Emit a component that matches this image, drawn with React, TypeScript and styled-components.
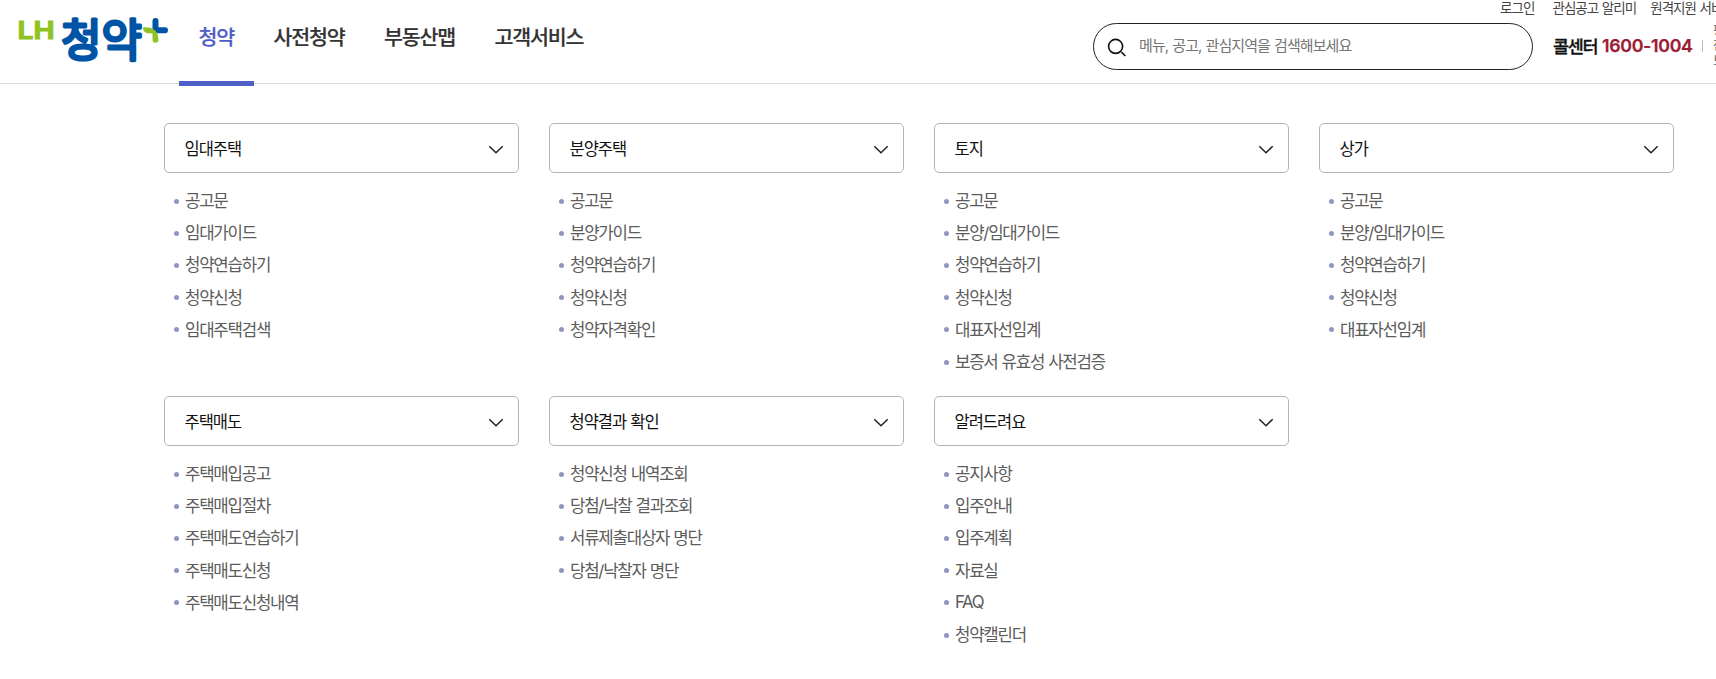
import React from 'react';
import styled, { createGlobalStyle } from 'styled-components';

const GlobalStyle = createGlobalStyle`
  * { box-sizing: border-box; }
  html, body { margin: 0; overflow: hidden; background: #fff; }
  body { font-family: Inter, 'Noto Sans CJK KR', sans-serif; color: #222; }
  ul { margin: 0; padding: 0; list-style: none; }
  a { color: inherit; text-decoration: none; }
  button { font: inherit; }
`;

const Page = styled.div`
  width: 1716px;
  height: 679px;
  overflow: hidden;
`;

const Header = styled.header`
  display: flex;
  height: 84px;
  border-bottom: 1px solid #d9d9d9;
`;

const Logo = styled.a`
  flex: none;
  width: 179px;
  height: 83px;
  svg { display: block; }
`;

const Nav = styled.nav`
  display: flex;
  height: 86px;
`;

const NavLink = styled.a<{ $active?: boolean }>`
  padding: 0 20px 0 19.5px;
  height: 86px;
  line-height: 76px;
  font-size: 20.6px;
  font-weight: 500;
  letter-spacing: -1.2px;
  white-space: nowrap;
  -webkit-text-stroke: 0.2px;
  color: ${p => (p.$active ? '#4f5dc8' : '#333')};
  border-bottom: 5px solid ${p => (p.$active ? '#4f5fc8' : 'transparent')};
`;

const SearchBox = styled.div`
  display: flex;
  align-items: center;
  flex: none;
  width: 440px;
  height: 47px;
  margin: 23px 0 0 auto;
  padding-left: 13px;
  border: 1px solid #222;
  border-radius: 24px;
`;

const SearchInput = styled.input`
  flex: 1;
  min-width: 0;
  height: 22px;
  margin: 0 20px 2px 12px;
  padding: 0;
  border: 0;
  outline: 0;
  background: none;
  font: 400 15px Inter, 'Noto Sans CJK KR', sans-serif;
  letter-spacing: -0.9px;
  word-spacing: 0.7px;
  &::placeholder { color: #757575; opacity: 1; }
`;

const Support = styled.div`
  flex: none;
  width: 183px;
`;

const UtilityRow = styled.div`
  display: flex;
  gap: 14px;
  width: 300px;
  height: 17px;
  margin-left: -33px;
  font-size: 13.5px;
  line-height: 17px;
  letter-spacing: -0.95px;
  word-spacing: 0.6px;
  white-space: nowrap;
  color: #444;
  a:first-child { margin-right: 4px; }
`;

const CallRow = styled.div`
  display: flex;
  align-items: center;
  width: 240px;
  height: 57px;
  padding-left: 20px;
  white-space: nowrap;
`;

const CallLabel = styled.span`
  padding-bottom: 1px;
  font-size: 17.5px;
  font-weight: 500;
  letter-spacing: -1.3px;
  -webkit-text-stroke: 0.3px;
  color: #111;
`;

const CallNumber = styled.strong`
  width: 91px;
  margin-left: 4.5px;
  font-size: 17.8px;
  font-weight: 600;
  letter-spacing: -0.3px;
  -webkit-text-stroke: 0.25px;
  color: #9b1c33;
`;

const Bar = styled.i`
  width: 1px;
  height: 12px;
  margin: 0 10px 0 9px;
  background: #bbb;
`;

const Hours = styled.span`
  font-size: 12px;
  line-height: 15px;
  color: #666;
`;

const Menu = styled.main`
  display: grid;
  grid-template-columns: repeat(4, 355px);
  grid-template-rows: 273px 273px;
  column-gap: 30px;
  padding: 39px 0 0 164px;
`;

const GroupButton = styled.button`
  display: flex;
  align-items: center;
  justify-content: space-between;
  width: 355px;
  height: 50px;
  padding: 0 14.5px 1px 19.5px;
  border: 1px solid #b4b4be;
  border-radius: 5px;
  background: #fff;
  color: #111;
  font-size: 16.5px;
  letter-spacing: -1px;
  word-spacing: 0.4px;
`;

const LinkList = styled.ul`
  padding: 12px 0 0 10px;
`;

const LinkItem = styled.li`
  display: flex;
  align-items: center;
  height: 32.2px;
  font-size: 16.8px;
  letter-spacing: -1.26px;
  word-spacing: 0.6px;
  white-space: nowrap;
  color: #5c5c5c;
  a { padding-bottom: 2px; }
  &::before {
    content: '';
    width: 5px;
    height: 5px;
    margin-right: 6px;
    border-radius: 50%;
    background: #9095c0;
  }
`;

const groups = [
  { title: '임대주택', links: ['공고문', '임대가이드', '청약연습하기', '청약신청', '임대주택검색'] },
  { title: '분양주택', links: ['공고문', '분양가이드', '청약연습하기', '청약신청', '청약자격확인'] },
  { title: '토지', links: ['공고문', '분양/임대가이드', '청약연습하기', '청약신청', '대표자선임계', '보증서 유효성 사전검증'] },
  { title: '상가', links: ['공고문', '분양/임대가이드', '청약연습하기', '청약신청', '대표자선임계'] },
  { title: '주택매도', links: ['주택매입공고', '주택매입절차', '주택매도연습하기', '주택매도신청', '주택매도신청내역'] },
  { title: '청약결과 확인', links: ['청약신청 내역조회', '당첨/낙찰 결과조회', '서류제출대상자 명단', '당첨/낙찰자 명단'] },
  { title: '알려드려요', links: ['공지사항', '입주안내', '입주계획', '자료실', 'FAQ', '청약캘린더'] },
];

const Chevron = () => (
  <svg width="16" height="16" viewBox="0 0 16 16" fill="none" stroke="#222" strokeWidth="1.5">
    <path d="M1.3 6.2 L8 12.8 L14.7 6.2" />
  </svg>
);

const SearchIcon = () => (
  <svg width="20" height="20" viewBox="0 0 20 20" fill="none" stroke="#111" strokeWidth="1.6">
    <circle cx="8.6" cy="9.4" r="7" />
    <path d="M14.4 15.2 L18.4 19" />
  </svg>
);

const LogoMark = () => (
  <svg width="179" height="83" viewBox="0 0 179 83">
    <text x="17.5" y="39" fill="#8fc31f" stroke="#8fc31f" strokeWidth="0.8" fontFamily="Inter" fontWeight="700" fontSize="24" textLength="37" lengthAdjust="spacingAndGlyphs">LH</text>
    <text x="61" y="57" fill="#0054a6" stroke="#0054a6" strokeWidth="3.1" strokeLinejoin="round" strokeLinecap="round" fontFamily="Noto Sans CJK KR" fontWeight="400" fontSize="45" textLength="81" lengthAdjust="spacingAndGlyphs">청약</text>
    <path d="M155.5 21 V30.2 H165" fill="none" stroke="#0054a6" strokeWidth="6" strokeLinecap="round" />
    <path d="M144 27.2 C153.5 26.6 158.5 31.5 158.5 39.5 A3 3 0 0 1 152.5 39.8 V33.2 H147.5 Q143.4 32 143 28.4 Q143 27.3 144 27.2 Z" fill="#8fc31f" />
  </svg>
);

export default function App() {
  return (
    <Page>
      <GlobalStyle />
      <Header>
        <Logo href="#"><LogoMark /></Logo>
        <Nav>
          <NavLink href="#" $active>청약</NavLink>
          <NavLink href="#">사전청약</NavLink>
          <NavLink href="#">부동산맵</NavLink>
          <NavLink href="#">고객서비스</NavLink>
        </Nav>
        <SearchBox>
          <SearchIcon />
          <SearchInput placeholder="메뉴, 공고, 관심지역을 검색해보세요" />
        </SearchBox>
        <Support>
          <UtilityRow>
            <a href="#">로그인</a>
            <a href="#">관심공고 알리미</a>
            <a href="#">원격지원 서비스</a>
          </UtilityRow>
          <CallRow>
            <CallLabel>콜센터</CallLabel>
            <CallNumber>1600-1004</CallNumber>
            <Bar />
            <Hours>평일<br />점심<br />토</Hours>
          </CallRow>
        </Support>
      </Header>
      <Menu>
        {groups.map(g => (
          <section key={g.title}>
            <GroupButton type="button">{g.title}<Chevron /></GroupButton>
            <LinkList>
              {g.links.map(l => <LinkItem key={l}><a href="#">{l}</a></LinkItem>)}
            </LinkList>
          </section>
        ))}
      </Menu>
    </Page>
  );
}
